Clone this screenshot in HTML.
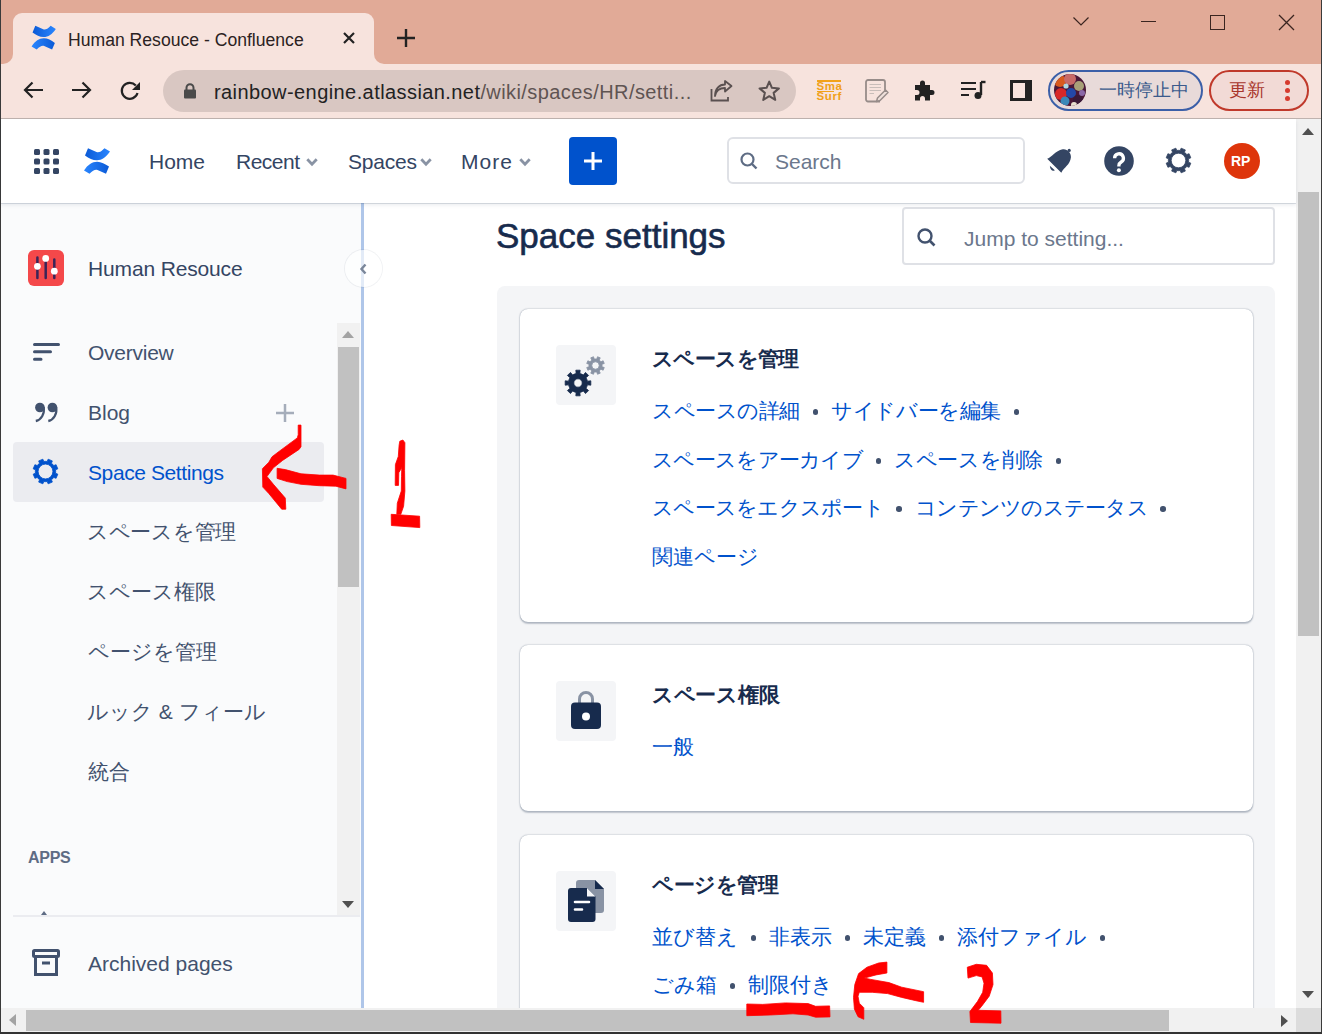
<!DOCTYPE html>
<html><head><meta charset="utf-8">
<style>
*{box-sizing:border-box;margin:0;padding:0}
html,body{width:1322px;height:1034px;overflow:hidden;background:#fff}
body{position:relative;font-family:"Liberation Sans",sans-serif;color:#172B4D}
.a{position:absolute}
svg{position:absolute;overflow:visible}
.t{position:absolute;white-space:nowrap;line-height:1}
.nav{font-size:21px;color:#344563}
.side{font-size:21px;color:#42526E}
.lk{color:#0052CC}
.dot{display:inline-block;width:31px;height:10px;position:relative}.dot:after{content:"";position:absolute;left:12.5px;top:1px;width:5.5px;height:5.5px;border-radius:50%;background:#42526E}
</style></head><body>
<!-- ===== window chrome ===== -->
<div class="a" style="left:0;top:0;width:1322px;height:64px;background:#E1AA97"></div>
<div class="a" style="left:0;top:64px;width:1322px;height:55px;background:#F7E3DD;border-bottom:1px solid #BFB3AF"></div>
<!-- tab -->
<div class="a" style="left:13px;top:13px;width:360.5px;height:52px;background:#F7E3DD;border-radius:9px 9px 0 0"></div>
<div class="a" style="left:3px;top:54px;width:10px;height:10px;background:#F7E3DD"></div>
<div class="a" style="left:3px;top:44px;width:10px;height:20px;background:#E1AA97;border-radius:0 0 10px 0"></div>
<div class="a" style="left:373.5px;top:54px;width:10px;height:10px;background:#F7E3DD"></div>
<div class="a" style="left:373.5px;top:44px;width:10px;height:20px;background:#E1AA97;border-radius:0 0 0 10px"></div>
<!-- tab favicon -->
<svg style="left:25.7px;top:19.6px" width="35.4" height="35.4" viewBox="0 0 38 38"><defs><linearGradient id="fg1" x1="0" y1="0" x2="1" y2="0"><stop offset="0" stop-color="#0B5AD6"/><stop offset="1" stop-color="#2A86FF"/></linearGradient><linearGradient id="fg2" x1="1" y1="0" x2="0" y2="0"><stop offset="0" stop-color="#0B5AD6"/><stop offset="1" stop-color="#2A86FF"/></linearGradient></defs>
 <path d="M10 6.2L18.5 10C20.5 10.8 23 10 26.5 6.2L32 9.6C28 15.5 24 18.2 19 18.3C15 18.4 11 16.2 7 13.4Z" fill="url(#fg1)"/>
 <path d="M28 31.8L19.5 28C17.5 27.2 15 28 11.5 31.8L6 28.4C10 22.5 14 19.8 19 19.7C23 19.6 27 21.8 31 24.6Z" fill="url(#fg2)"/></svg>
<div class="t" style="left:68px;top:32px;font-size:17.6px;color:#2B2222">Human Resouce - Confluence</div>
<!-- tab close -->
<svg style="left:343px;top:32px" width="12" height="12" viewBox="0 0 12 12"><path d="M1 1L11 11M11 1L1 11" stroke="#222" stroke-width="2.2"/></svg>
<!-- new tab plus -->
<svg style="left:397px;top:29px" width="18" height="18" viewBox="0 0 18 18"><path d="M9 0V18M0 9H18" stroke="#222" stroke-width="2.4"/></svg>
<!-- window controls -->
<svg style="left:1073px;top:17px" width="16" height="10" viewBox="0 0 16 10"><path d="M0.5 0.5L8 8L15.5 0.5" stroke="#3a2520" stroke-width="1.2" fill="none"/></svg>
<div class="a" style="left:1141px;top:21px;width:15px;height:1.3px;background:#3a2520"></div>
<div class="a" style="left:1210px;top:15px;width:15px;height:15px;border:1.3px solid #3a2520"></div>
<svg style="left:1279px;top:15px" width="15" height="15" viewBox="0 0 15 15"><path d="M0 0L15 15M15 0L0 15" stroke="#3a2520" stroke-width="1.3"/></svg>

<!-- toolbar icons -->
<svg style="left:23px;top:81px" width="21" height="18" viewBox="0 0 21 18"><path d="M20 9H2M9.5 1.5L2 9L9.5 16.5" stroke="#222" stroke-width="2.2" fill="none"/></svg>
<svg style="left:71px;top:81px" width="21" height="18" viewBox="0 0 21 18"><path d="M1 9H19M11.5 1.5L19 9L11.5 16.5" stroke="#222" stroke-width="2.2" fill="none"/></svg>
<svg style="left:120px;top:81px" width="21" height="19" viewBox="0 0 21 19"><path d="M17.5 12A8 8 0 1 1 15.8 4.5" stroke="#222" stroke-width="2.2" fill="none"/><path d="M20 1V9H12Z" fill="#222"/></svg>
<!-- url bar -->
<div class="a" style="left:163px;top:70px;width:633px;height:42px;border-radius:21px;background:#D9C7C2"></div>
<svg style="left:183px;top:83px" width="14" height="16" viewBox="0 0 14 16"><path d="M3.5 7V4.8A3.5 3.5 0 0 1 10.5 4.8V7" stroke="#4a4a4a" stroke-width="2" fill="none"/><rect x="1" y="6.5" width="12" height="9" rx="1" fill="#4a4a4a"/></svg>
<div class="t" style="left:214px;top:82px;font-size:20px;color:#222;letter-spacing:0.42px"><span>rainbow-engine.atlassian.net</span><span style="color:#5f5452">/wiki/spaces/HR/setti...</span></div>
<!-- share -->
<svg style="left:710px;top:81px" width="23" height="21" viewBox="0 0 23 21"><path d="M1.5 8V19.5H18V16" stroke="#5a5050" stroke-width="1.8" fill="none"/><path d="M5 15C6 9 10 7 15 7V10.5L21.5 5L15 0V3.5C9 3.5 5 8 5 15Z" stroke="#5a5050" stroke-width="1.8" fill="none" stroke-linejoin="round"/></svg>
<!-- star -->
<svg style="left:757.5px;top:80px" width="22.5" height="21.5" viewBox="0 0 21 20"><path d="M10.5 1.5L13 7.3L19.5 7.8L14.6 12L16.1 18.5L10.5 15.1L4.9 18.5L6.4 12L1.5 7.8L8 7.3Z" stroke="#5a5050" stroke-width="1.9" fill="none" stroke-linejoin="round"/></svg>
<!-- smasurf -->
<div class="a" style="left:817px;top:80px;width:24px;height:1.5px;background:#F2A21A"></div><div class="a" style="left:817px;top:90.5px;width:17px;height:1.2px;background:#F2A21A"></div>
<div class="t" style="left:816.5px;top:81px;font-size:11.5px;font-weight:bold;color:#F0A018;line-height:10px;letter-spacing:0.6px">Sma<br>Surf</div>
<!-- notepad -->
<svg style="left:865px;top:79px" width="25" height="24" viewBox="0 0 25 24"><path d="M15 22.5H3A2 2 0 0 1 1 20.5V3A2 2 0 0 1 3 1H18A2 2 0 0 1 20 3V13" stroke="#978c89" stroke-width="1.8" fill="none"/><path d="M4.5 5.5H16M4.5 8.5H16M4.5 11.5H16M4.5 14.5H9" stroke="#C8BDB9" stroke-width="1.2"/><path d="M11.5 22.5L12.5 19L20.5 11L23 13.5L15 21.5Z" stroke="#978c89" stroke-width="1.5" fill="#EFE0DB" stroke-linejoin="round"/></svg>
<!-- puzzle -->
<svg style="left:914px;top:80px" width="22" height="21" viewBox="0 0 22 21"><path d="M1 5H6V3A2.5 2.5 0 0 1 11 3V5H16V10H18A2.5 2.5 0 0 1 18 15H16V20.5H11V18.5A2.5 2.5 0 0 0 6 18.5V20.5H1V15H3A2.5 2.5 0 0 0 3 10H1Z" fill="#222"/></svg>
<!-- media -->
<svg style="left:961px;top:81px" width="25" height="18" viewBox="0 0 25 18"><path d="M0 2H15M0 8H15M0 14H8" stroke="#222" stroke-width="2.2"/><path d="M20 1V14" stroke="#222" stroke-width="2.4"/><path d="M20 1H24.5" stroke="#222" stroke-width="2.4"/><circle cx="17" cy="14.5" r="3.5" fill="#222"/></svg>
<!-- sidebar icon -->
<div class="a" style="left:1010px;top:80px;width:22px;height:21px;border:3px solid #222;border-right-width:7px"></div>
<!-- profile pill -->
<div class="a" style="left:1048px;top:70px;width:155px;height:41px;border-radius:21px;border:2px solid #3B5FA8;background:#E8DAD9"></div>
<svg style="left:1053.7px;top:74.1px" width="32" height="32" viewBox="0 0 32 32"><defs><clipPath id="av"><circle cx="16" cy="16" r="16"/></clipPath></defs><g clip-path="url(#av)">
 <rect width="32" height="32" fill="#4A1838"/>
 <circle cx="6" cy="7" r="6" fill="#D85A1E"/><circle cx="16" cy="5" r="6" fill="#C86A68"/><circle cx="25" cy="12" r="5" fill="#A8A078"/>
 <circle cx="12" cy="12" r="2.6" fill="#B0D8E0"/><circle cx="7" cy="20" r="6" fill="#D82828"/><circle cx="17" cy="19" r="5" fill="#2448A8"/>
 <circle cx="11" cy="27" r="4.5" fill="#3A88B8"/><circle cx="24" cy="26" r="5" fill="#3A1A38"/><circle cx="28" cy="19" r="3" fill="#8A68A8"/><circle cx="20" cy="31" r="3" fill="#E8E0D0"/>
</g></svg>
<div class="t" style="left:1099px;top:81px;font-size:18px;color:#3B5A8C">一時停止中</div>
<!-- update pill -->
<div class="a" style="left:1209px;top:70px;width:100px;height:41px;border-radius:21px;border:2px solid #C0392B;background:#F2DAD6"></div>
<div class="t" style="left:1229px;top:81px;font-size:18px;color:#A8352B">更新</div>
<div class="a" style="left:1285px;top:80px;width:5px;height:5px;border-radius:50%;background:#D63A2E"></div>
<div class="a" style="left:1285px;top:88px;width:5px;height:5px;border-radius:50%;background:#D63A2E"></div>
<div class="a" style="left:1285px;top:96px;width:5px;height:5px;border-radius:50%;background:#D63A2E"></div>

<!-- ===== confluence header ===== -->
<div class="a" style="left:1px;top:119px;width:1295px;height:84px;background:#fff;box-shadow:0 1px 0 rgba(9,30,66,0.13),0 2px 4px rgba(9,30,66,0.09);z-index:2">
</div>
<div id="hdr" class="a" style="left:0;top:0;width:1322px;height:1034px;z-index:3;pointer-events:none">
<!-- grid icon -->
<svg style="left:34px;top:149px" width="25" height="25" viewBox="0 0 25 25" fill="#344563">
 <rect x="0" y="0" width="6" height="6" rx="1.5"/><rect x="9.5" y="0" width="6" height="6" rx="1.5"/><rect x="19" y="0" width="6" height="6" rx="1.5"/>
 <rect x="0" y="9.5" width="6" height="6" rx="1.5"/><rect x="9.5" y="9.5" width="6" height="6" rx="1.5"/><rect x="19" y="9.5" width="6" height="6" rx="1.5"/>
 <rect x="0" y="19" width="6" height="6" rx="1.5"/><rect x="9.5" y="19" width="6" height="6" rx="1.5"/><rect x="19" y="19" width="6" height="6" rx="1.5"/>
</svg>
<!-- confluence logo -->
<svg style="left:78px;top:142px" width="38" height="38" viewBox="0 0 38 38"><defs><linearGradient id="lg1" x1="0" y1="0" x2="1" y2="0"><stop offset="0" stop-color="#0B5AD6"/><stop offset="1" stop-color="#2A86FF"/></linearGradient><linearGradient id="lg2" x1="1" y1="0" x2="0" y2="0"><stop offset="0" stop-color="#0B5AD6"/><stop offset="1" stop-color="#2A86FF"/></linearGradient></defs>
 <path d="M10 6.2L18.5 10C20.5 10.8 23 10 26.5 6.2L32 9.6C28 15.5 24 18.2 19 18.3C15 18.4 11 16.2 7 13.4Z" fill="url(#lg1)"/>
 <path d="M28 31.8L19.5 28C17.5 27.2 15 28 11.5 31.8L6 28.4C10 22.5 14 19.8 19 19.7C23 19.6 27 21.8 31 24.6Z" fill="url(#lg2)"/></svg>
<div class="t nav" style="left:149px;top:151px">Home</div>
<div class="t nav" style="left:236px;top:151px;letter-spacing:-0.5px">Recent</div>
<svg style="left:306px;top:157.5px" width="12" height="8" viewBox="0 0 12 8"><path d="M1.3 1.3L6 6.2L10.7 1.3" stroke="#8993A4" stroke-width="2.8" fill="none"/></svg>
<div class="t nav" style="left:348px;top:151px;letter-spacing:-0.2px">Spaces</div>
<svg style="left:419.5px;top:157.5px" width="12" height="8" viewBox="0 0 12 8"><path d="M1.3 1.3L6 6.2L10.7 1.3" stroke="#8993A4" stroke-width="2.8" fill="none"/></svg>
<div class="t nav" style="left:461px;top:151px;letter-spacing:1px">More</div>
<svg style="left:518.5px;top:157.5px" width="12" height="8" viewBox="0 0 12 8"><path d="M1.3 1.3L6 6.2L10.7 1.3" stroke="#8993A4" stroke-width="2.8" fill="none"/></svg>
<div class="a" style="left:569px;top:137px;width:48px;height:48px;border-radius:4px;background:#0052CC"></div>
<svg style="left:584px;top:152px" width="18" height="18" viewBox="0 0 18 18"><path d="M9 0V18M0 9H18" stroke="#fff" stroke-width="3"/></svg>
<!-- search -->
<div class="a" style="left:727px;top:137px;width:298px;height:47px;border:2.5px solid #DFE1E6;border-radius:6px;background:#fff"></div>
<svg style="left:740px;top:152px" width="19" height="17" viewBox="0 0 19 17"><circle cx="7.5" cy="7.5" r="6" stroke="#5E6C84" stroke-width="2.2" fill="none"/><path d="M12 12L16.5 16.5" stroke="#5E6C84" stroke-width="2.4"/></svg>
<div class="t" style="left:775px;top:151px;font-size:21px;color:#6B778C">Search</div>
<!-- bell -->
<svg style="left:1040px;top:142px" width="40" height="38" viewBox="0 0 40 38"><path d="M7.2 16.7C12 15 15 9 22.8 7.2C27 6.5 31.5 11 30.9 15.4C30 23 24 25 21.3 30.7Z" fill="#344563"/><circle cx="29.2" cy="8.4" r="1.6" fill="#344563"/><path d="M9.8 23.8L14.8 28.2C13 29.8 10.2 28.5 9.8 23.8Z" fill="#344563"/></svg>
<!-- help -->
<svg style="left:1100px;top:142px" width="38" height="38" viewBox="0 0 38 38"><circle cx="19" cy="19" r="14.8" fill="#344563"/><path d="M14.6 16.3A4.4 4.4 0 1 1 21.2 20C19.6 21 18.9 21.6 18.9 23.6V24.5" stroke="#fff" stroke-width="3.3" fill="none"/><circle cx="18.9" cy="28.3" r="2" fill="#fff"/></svg>
<!-- gear -->
<svg style="left:1165px;top:147px" width="27" height="27" viewBox="-13.5 -13.5 27 27" id="gearHdr"><path fill-rule="evenodd" fill="#344563" stroke="#344563" stroke-width="0.8" stroke-linejoin="round" d="M1.67 -10.06L2.63 -12.32L6.85 -10.57L5.93 -8.30A10.20 10.20 0 0 1 8.30 -5.93L10.57 -6.85L12.32 -2.63L10.06 -1.67A10.20 10.20 0 0 1 10.06 1.67L12.32 2.63L10.57 6.85L8.30 5.93A10.20 10.20 0 0 1 5.93 8.30L6.85 10.57L2.63 12.32L1.67 10.06A10.20 10.20 0 0 1 -1.67 10.06L-2.63 12.32L-6.85 10.57L-5.93 8.30A10.20 10.20 0 0 1 -8.30 5.93L-10.57 6.85L-12.32 2.63L-10.06 1.67A10.20 10.20 0 0 1 -10.06 -1.67L-12.32 -2.63L-10.57 -6.85L-8.30 -5.93A10.20 10.20 0 0 1 -5.93 -8.30L-6.85 -10.57L-2.63 -12.32L-1.67 -10.06A10.20 10.20 0 0 1 1.67 -10.06ZM7.30 0A7.30 7.30 0 1 0 -7.30 0A7.30 7.30 0 1 0 7.30 0Z"/></svg>
<!-- avatar -->
<div class="a" style="left:1224px;top:143px;width:36px;height:36px;border-radius:50%;background:#DE350B"></div>
<div class="t" style="left:1231px;top:154px;font-size:14px;font-weight:bold;color:#fff">RP</div>
</div>

<!-- ===== sidebar ===== -->
<div class="a" style="left:1px;top:203px;width:360px;height:805px;background:#FAFBFC"></div>
<div class="a" style="left:361px;top:203px;width:3px;height:805px;background:#AFC6E9"></div>
<div class="a" style="left:345px;top:250px;width:37px;height:37px;border-radius:50%;background:rgba(255,255,255,0.65);box-shadow:0 0 0 1px rgba(9,30,66,0.06)"></div>
<svg style="left:360px;top:263px" width="7" height="12" viewBox="0 0 7 12"><path d="M5.5 1.5L1.5 6L5.5 10.5" stroke="#7A869A" stroke-width="2.4" fill="none"/></svg>
<!-- space icon -->
<svg style="left:28px;top:250px" width="36" height="36" viewBox="0 0 36 36">
 <rect x="0" y="0" width="36" height="36" rx="6" fill="#F4484A"/>
 <path d="M9.4 7.5V28M17.7 8.5V28M26.3 9.5V28" stroke="#3A2558" stroke-width="2.5" stroke-linecap="round"/>
 <circle cx="9.4" cy="16.3" r="3.4" fill="#fff"/><circle cx="17.7" cy="8.4" r="3.4" fill="#fff"/><circle cx="26.3" cy="21.2" r="3.4" fill="#fff"/>
</svg>
<div class="t side" style="left:88px;top:258px;color:#344563;letter-spacing:-0.15px">Human Resouce</div>
<!-- overview -->
<svg style="left:33px;top:343px" width="27" height="18" viewBox="0 0 27 18"><path d="M1.5 1.5H25.5M1.5 8.8H17.5M1.5 16.3H8" stroke="#42526E" stroke-width="3" stroke-linecap="round"/></svg>
<div class="t side" style="left:88px;top:342px;letter-spacing:-0.25px">Overview</div>
<!-- blog -->
<svg style="left:26px;top:395px" width="40" height="35" viewBox="0 0 40 35" fill="#42526E">
 <circle cx="13.9" cy="12.5" r="4.8"/><path d="M17.6 12C19 19 15 25 9.8 26" stroke="#42526E" stroke-width="2.3" fill="none"/>
 <circle cx="26.4" cy="12.5" r="4.8"/><path d="M30.1 12C31.5 19 27.5 25 22.3 26" stroke="#42526E" stroke-width="2.3" fill="none"/>
</svg>
<div class="t side" style="left:88px;top:402px">Blog</div>
<svg style="left:276px;top:404px" width="18" height="18" viewBox="0 0 18 18"><path d="M9 0V18M0 9H18" stroke="#A5ADBA" stroke-width="2.5"/></svg>
<!-- selected -->
<div class="a" style="left:13px;top:442px;width:311px;height:60px;border-radius:4px;background:#EBECF0"></div>
<svg style="left:32px;top:458px" width="27" height="27" viewBox="-13.5 -13.5 27 27" id="gearSide"><path fill-rule="evenodd" fill="#0052CC" stroke="#0052CC" stroke-width="0.8" stroke-linejoin="round" d="M1.67 -10.06L2.63 -12.32L6.85 -10.57L5.93 -8.30A10.20 10.20 0 0 1 8.30 -5.93L10.57 -6.85L12.32 -2.63L10.06 -1.67A10.20 10.20 0 0 1 10.06 1.67L12.32 2.63L10.57 6.85L8.30 5.93A10.20 10.20 0 0 1 5.93 8.30L6.85 10.57L2.63 12.32L1.67 10.06A10.20 10.20 0 0 1 -1.67 10.06L-2.63 12.32L-6.85 10.57L-5.93 8.30A10.20 10.20 0 0 1 -8.30 5.93L-10.57 6.85L-12.32 2.63L-10.06 1.67A10.20 10.20 0 0 1 -10.06 -1.67L-12.32 -2.63L-10.57 -6.85L-8.30 -5.93A10.20 10.20 0 0 1 -5.93 -8.30L-6.85 -10.57L-2.63 -12.32L-1.67 -10.06A10.20 10.20 0 0 1 1.67 -10.06ZM7.40 0A7.40 7.40 0 1 0 -7.40 0A7.40 7.40 0 1 0 7.40 0Z"/></svg>
<div class="t side" style="left:88px;top:462px;color:#0052CC;letter-spacing:-0.4px">Space Settings</div>
<div class="t side" style="left:87px;top:521px;letter-spacing:-0.3px">スペースを管理</div>
<div class="t side" style="left:86.5px;top:581px">スペース権限</div>
<div class="t side" style="left:88px;top:641px">ページを管理</div>
<div class="t side" style="left:87px;top:701px">ルック &amp; フィール</div>
<div class="t side" style="left:88px;top:761px">統合</div>
<div class="t" style="left:28px;top:850px;font-size:16px;font-weight:bold;color:#5E6C84;letter-spacing:-0.3px">APPS</div>
<!-- sidebar scrollbar -->
<div class="a" style="left:337px;top:323px;width:23px;height:593px;background:#F1F1F1"></div>
<div class="a" style="left:338px;top:347px;width:21px;height:240px;background:#C1C1C1"></div>
<svg style="left:342px;top:331px" width="12" height="7" viewBox="0 0 12 7"><path d="M6 0L12 7H0Z" fill="#A3A3A3"/></svg>
<svg style="left:342px;top:901px" width="12" height="7" viewBox="0 0 12 7"><path d="M0 0H12L6 7Z" fill="#505050"/></svg>
<div class="a" style="left:13px;top:915px;width:347px;height:2px;background:#EBECF0"></div>
<svg style="left:41px;top:911px" width="6" height="4" viewBox="0 0 6 4"><path d="M3 0L6 4H0Z" fill="#5E6C84"/></svg>
<!-- archived -->
<svg style="left:32px;top:949px" width="28" height="28" viewBox="0 0 28 28"><rect x="1.5" y="1.5" width="25" height="6" rx="1" stroke="#42526E" stroke-width="3" fill="none"/><path d="M3.5 7.5V25.5H24.5V7.5" stroke="#42526E" stroke-width="3" fill="none"/><path d="M10 14H18" stroke="#42526E" stroke-width="3"/></svg>
<div class="t side" style="left:88px;top:953px">Archived pages</div>

<!-- ===== main ===== -->
<div class="t" style="left:496px;top:218px;font-size:35px;font-weight:normal;color:#172B4D;-webkit-text-stroke:0.6px #172B4D">Space settings</div>
<div class="a" style="left:902px;top:207px;width:373px;height:58px;border:2.5px solid #DFE1E6;border-radius:4px;background:#fff"></div>
<svg style="left:917px;top:228px" width="19" height="19" viewBox="0 0 19 19"><circle cx="8" cy="8" r="6.5" stroke="#42526E" stroke-width="2.4" fill="none"/><path d="M12.5 12.5L17.5 17.5" stroke="#42526E" stroke-width="2.6"/></svg>
<div class="t" style="left:964px;top:228px;font-size:21px;color:#6B778C">Jump to setting...</div>

<div class="a" style="left:497px;top:286px;width:778px;height:740px;border-radius:8px;background:#F4F5F7"></div>
<!-- card 1 -->
<div class="a" style="left:520px;top:308.5px;width:733px;height:313px;border-radius:8px;background:#fff;box-shadow:0 0 1.5px rgba(9,30,66,0.45),0 1.5px 1.5px rgba(9,30,66,0.22)"></div>
<div class="a" style="left:556px;top:345px;width:60px;height:60px;border-radius:4px;background:#F4F5F7"></div>
<svg style="left:565px;top:370px" width="26" height="26" viewBox="-13 -13 26 26" id="gearBig"><path fill-rule="evenodd" fill="#172B4D" stroke="#172B4D" stroke-width="0.8" stroke-linejoin="round" d="M-1.87 -9.42L-2.16 -12.82L2.16 -12.82L1.87 -9.42A9.60 9.60 0 0 1 5.33 -7.98L7.54 -10.59L10.59 -7.54L7.98 -5.33A9.60 9.60 0 0 1 9.42 -1.87L12.82 -2.16L12.82 2.16L9.42 1.87A9.60 9.60 0 0 1 7.98 5.33L10.59 7.54L7.54 10.59L5.33 7.98A9.60 9.60 0 0 1 1.87 9.42L2.16 12.82L-2.16 12.82L-1.87 9.42A9.60 9.60 0 0 1 -5.33 7.98L-7.54 10.59L-10.59 7.54L-7.98 5.33A9.60 9.60 0 0 1 -9.42 1.87L-12.82 2.16L-12.82 -2.16L-9.42 -1.87A9.60 9.60 0 0 1 -7.98 -5.33L-10.59 -7.54L-7.54 -10.59L-5.33 -7.98A9.60 9.60 0 0 1 -1.87 -9.42ZM4.20 0A4.20 4.20 0 1 0 -4.20 0A4.20 4.20 0 1 0 4.20 0Z"/></svg>
<svg style="left:586px;top:356px" width="19" height="19" viewBox="-9.5 -9.5 19 19" id="gearSmall"><path fill-rule="evenodd" fill="#8993A4" stroke="#8993A4" stroke-width="0.8" stroke-linejoin="round" d="M1.29 -6.47L2.01 -8.77L4.78 -7.63L3.67 -5.49A6.60 6.60 0 0 1 5.49 -3.67L7.63 -4.78L8.77 -2.01L6.47 -1.29A6.60 6.60 0 0 1 6.47 1.29L8.77 2.01L7.63 4.78L5.49 3.67A6.60 6.60 0 0 1 3.67 5.49L4.78 7.63L2.01 8.77L1.29 6.47A6.60 6.60 0 0 1 -1.29 6.47L-2.01 8.77L-4.78 7.63L-3.67 5.49A6.60 6.60 0 0 1 -5.49 3.67L-7.63 4.78L-8.77 2.01L-6.47 1.29A6.60 6.60 0 0 1 -6.47 -1.29L-8.77 -2.01L-7.63 -4.78L-5.49 -3.67A6.60 6.60 0 0 1 -3.67 -5.49L-4.78 -7.63L-2.01 -8.77L-1.29 -6.47A6.60 6.60 0 0 1 1.29 -6.47ZM3.70 0A3.70 3.70 0 1 0 -3.70 0A3.70 3.70 0 1 0 3.70 0Z"/></svg>
<div class="t" style="left:652px;top:348px;font-size:21px;font-weight:bold;color:#172B4D;letter-spacing:-0.6px">スペースを管理</div>
<div class="t lk" style="left:652px;top:400px;font-size:21px"><span style="letter-spacing:-0.43px">スペースの詳細</span><span class="dot"></span><span style="letter-spacing:-0.37px">サイドバーを編集</span><span class="dot"></span></div>
<div class="t lk" style="left:652px;top:449px;font-size:21px"><span style="letter-spacing:-0.7px">スペースをアーカイブ</span><span class="dot"></span><span style="letter-spacing:-0.28px">スペースを削除</span><span class="dot"></span></div>
<div class="t lk" style="left:652px;top:497px;font-size:21px"><span style="letter-spacing:-0.73px">スペースをエクスポート</span><span class="dot"></span><span style="letter-spacing:-0.73px">コンテンツのステータス</span><span class="dot"></span></div>
<div class="t lk" style="left:652px;top:546px;font-size:21px">関連ページ</div>
<!-- card 2 -->
<div class="a" style="left:520px;top:644.5px;width:733px;height:166.5px;border-radius:8px;background:#fff;box-shadow:0 0 1.5px rgba(9,30,66,0.45),0 1.5px 1.5px rgba(9,30,66,0.22)"></div>
<div class="a" style="left:556px;top:681px;width:60px;height:60px;border-radius:4px;background:#F4F5F7"></div>
<svg style="left:571px;top:692px" width="30" height="37" viewBox="0 0 30 37"><path d="M8.5 11V7A6.5 6.5 0 0 1 21.5 7V11" stroke="#8993A4" stroke-width="3" fill="none"/><rect x="0" y="10.5" width="30" height="26.5" rx="4" fill="#172B4D"/><circle cx="15" cy="24.5" r="4" fill="#fff"/></svg>
<div class="t" style="left:652px;top:684px;font-size:21px;font-weight:bold;color:#172B4D;letter-spacing:-0.3px">スペース権限</div>
<div class="t lk" style="left:652px;top:736px;font-size:21px">一般</div>
<!-- card 3 -->
<div class="a" style="left:520px;top:834.5px;width:733px;height:300px;border-radius:8px;background:#fff;box-shadow:0 0 1.5px rgba(9,30,66,0.45),0 1.5px 1.5px rgba(9,30,66,0.22)"></div>
<div class="a" style="left:556px;top:871px;width:60px;height:60px;border-radius:4px;background:#F4F5F7"></div>
<svg style="left:568px;top:880px" width="36" height="43" viewBox="0 0 36 43"><path d="M8 3A3 3 0 0 1 11 0H27L36 9V30A3 3 0 0 1 33 33H11A3 3 0 0 1 8 30Z" fill="#8993A4"/><path d="M27 0L36 9H27Z" fill="#172B4D"/><path d="M0 11A3 3 0 0 1 3 8H19L27.5 16.5V39A3 3 0 0 1 24.5 42H3A3 3 0 0 1 0 39Z" fill="#172B4D"/><path d="M19 8L27.5 16.5H19Z" fill="#F4F5F7"/><path d="M7 22H21M7 29.5H14" stroke="#fff" stroke-width="2.6" stroke-linecap="round"/></svg>
<div class="t" style="left:652px;top:874px;font-size:21px;font-weight:bold;color:#172B4D;letter-spacing:-0.5px">ページを管理</div>
<div class="t lk" style="left:652px;top:926px;font-size:21px">並び替え<span class="dot"></span>非表示<span class="dot"></span>未定義<span class="dot"></span>添付ファイル<span class="dot"></span></div>
<div class="t lk" style="left:652px;top:974px;font-size:21px">ごみ箱<span class="dot"></span>制限付き</div>

<!-- ===== page scrollbars ===== -->
<div class="a" style="left:1296px;top:119px;width:25px;height:889px;background:#F1F1F1"></div>
<div class="a" style="left:1298px;top:192px;width:21px;height:444px;background:#C1C1C1"></div>
<svg style="left:1302px;top:128px" width="12" height="7" viewBox="0 0 12 7"><path d="M6 0L12 7H0Z" fill="#505050"/></svg>
<svg style="left:1302px;top:991px" width="12" height="7" viewBox="0 0 12 7"><path d="M0 0H12L6 7Z" fill="#505050"/></svg>
<div class="a" style="left:1px;top:1008px;width:1295px;height:24px;background:#F1F1F1"></div>
<div class="a" style="left:26px;top:1010px;width:1143px;height:21px;background:#C1C1C1"></div>
<svg style="left:9px;top:1014px" width="7" height="12" viewBox="0 0 7 12"><path d="M7 0V12L0 6Z" fill="#A3A3A3"/></svg>
<svg style="left:1281px;top:1015px" width="7" height="12" viewBox="0 0 7 12"><path d="M0 0V12L7 6Z" fill="#505050"/></svg>
<div class="a" style="left:1296px;top:1008px;width:25px;height:24px;background:#DCDCDC"></div>

<!-- ===== annotations ===== -->
<svg style="left:0;top:0" width="1322" height="1034" viewBox="0 0 1322 1034"><g fill="#FF0000" stroke="#FF0000" stroke-width="0.8" stroke-linejoin="round">
 <path d="M298.2 425.1L301.0 425.1L301.0 446.7L299.1 449.4L282.6 460.4L273.4 467.8L267.0 476.5L273.4 484.3L285.3 498.1L285.8 509.2L281.7 509.2L268.8 493.5L262.8 487.1L262.4 468.7L268.8 462.3L272.0 456.8L278.0 452.2L297.3 437.9L298.2 434.7Z"/>
 <path d="M277.1 468.3L285.3 469.6L301.0 473.8L319.3 475.1L333.1 475.1L346.0 478.4L346.0 488.9L335.9 486.2L319.3 485.7L301.0 484.3L287.2 481.6L277.1 478.4Z"/>
 <path d="M399.8 441.2L402.9 440.0L404.9 442.7L404.6 470.7L404.9 491.0L403.6 506.2L400.8 514.3L396.8 514.3L397.3 503.2L401.3 491.0L401.5 476.7L401.8 467.6L398.8 472.7L398.5 485.4L395.2 485.4L395.4 464.6L398.3 456.4L399.1 445.2Z"/>
 <path d="M391.2 514.3L419.6 516.2L419.8 527.6L391.4 525.5Z"/>
 <path d="M746.8 1004.0L762.7 1004.4L785.4 1002.9L808.1 1003.6L815.6 1006.3L829.6 1005.9L830.0 1016.9L815.6 1017.2L808.1 1015.0L793.0 1013.8L770.3 1015.0L746.8 1015.7Z"/>
 <path d="M886.9 962.1L878.6 963.0L867.0 967.2L858.6 973.6L854.8 984.6L853.5 997.4L854.4 1009.0L858.0 1016.7L863.8 1019.3L863.8 1007.7L859.3 1003.2L858.0 996.2L859.3 992.3L872.2 992.3L887.6 993.6L901.7 997.4L915.9 1000.7L923.6 1002.3L923.6 991.7L901.7 987.2L888.9 982.6L870.9 979.4L864.4 978.1L876.0 974.9L886.9 973.0Z"/>
 <path d="M967.3 967.2L976.3 964.3L986.6 965.3L992.4 973.0L993.0 984.6L989.2 996.2L981.5 1006.4L978.2 1010.3L1000.8 1010.9L1001.0 1023.2L970.5 1022.5L969.9 1011.6L977.6 1001.3L982.7 992.3L984.0 983.3L982.1 976.9L976.3 975.6L968.0 978.1Z"/>
</g></svg>

<!-- borders -->
<div class="a" style="left:0;top:0;width:1px;height:1034px;background:#3a3a3a"></div>
<div class="a" style="left:1321px;top:0;width:1px;height:1034px;background:#3a3a3a"></div>
<div class="a" style="left:0;top:1032px;width:1322px;height:2px;background:#333"></div>


</body></html>
